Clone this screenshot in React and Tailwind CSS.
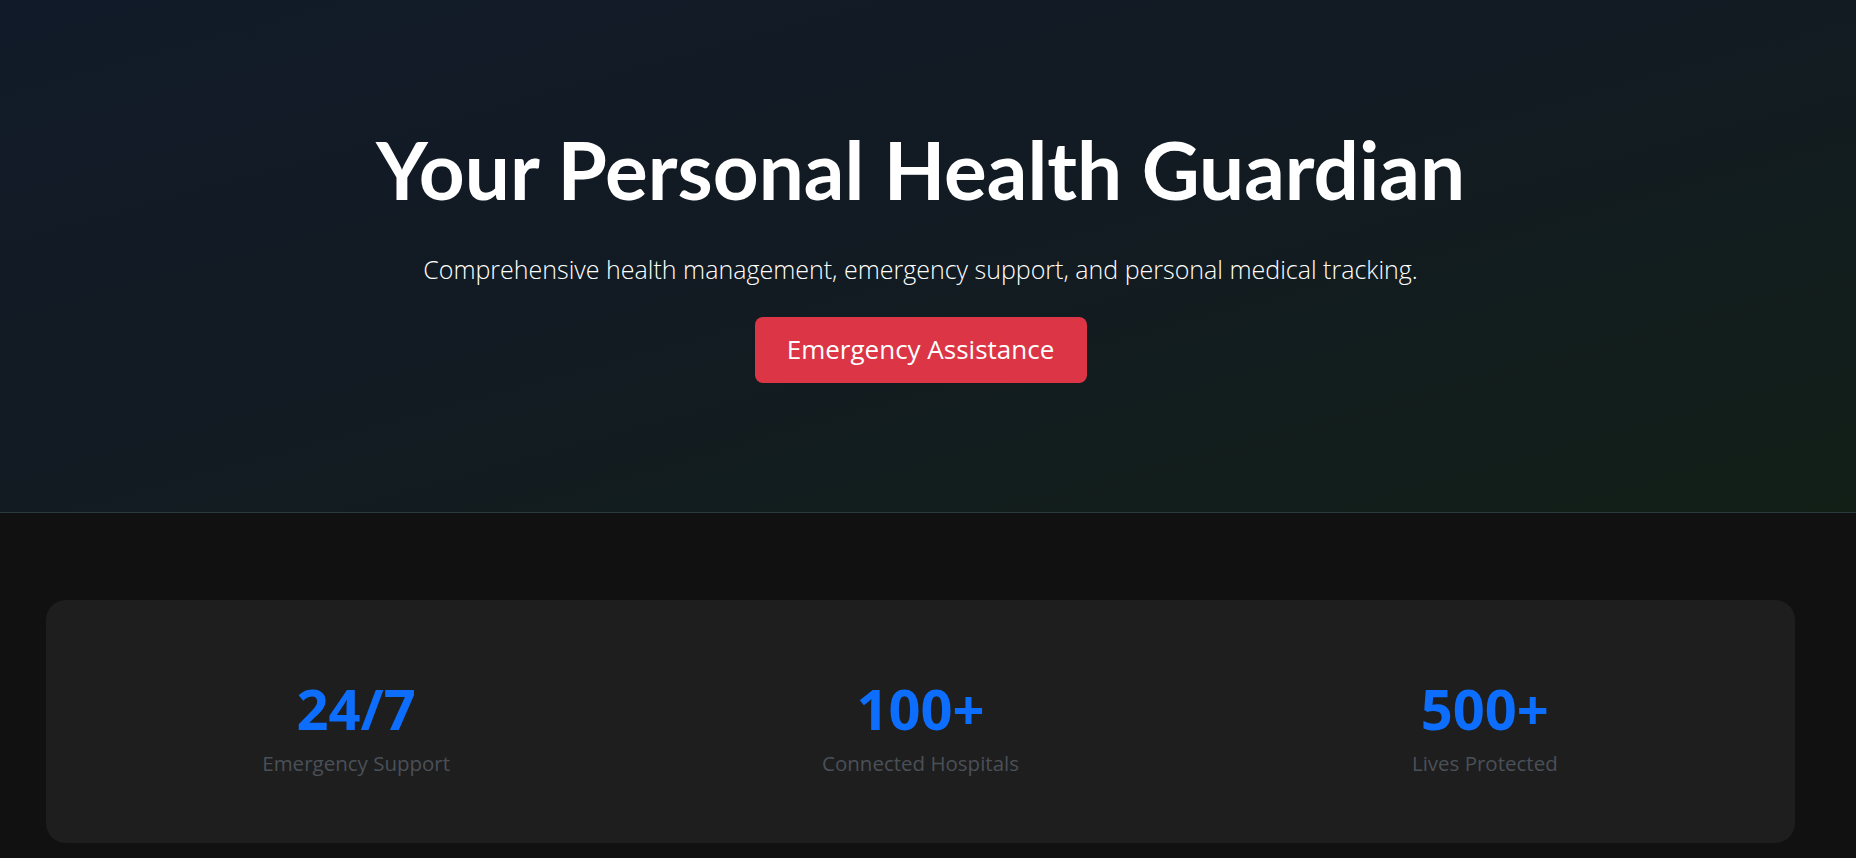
import React from "react";

const stats = [
  { value: "24/7", label: "Emergency Support" },
  { value: "100+", label: "Connected Hospitals" },
  { value: "500+", label: "Lives Protected" },
];

export default function App() {
  return (
    <div className="min-h-screen bg-[#111111] font-['Segoe_UI','Open_Sans',sans-serif]">
      {/* hero */}
      <section className="h-[513px] bg-linear-to-br from-[#111a28] via-[#121b22] to-[#121f17] border-b border-[#2b3a3e]">
        <div className="h-full pr-[15px] pb-[8px] flex flex-col items-center justify-center text-center">
          <h1 className="font-['Lato',sans-serif] text-[80px] leading-[1.2] font-bold text-white">Your Personal Health Guardian</h1>
          <p className="mt-[34px] text-[25px] font-light text-white">
            Comprehensive health management, emergency support, and personal medical tracking.
          </p>
          <button className="mt-[28px] w-[332px] h-[66px] rounded-lg bg-[#dc3545] text-white text-[26px]">
            Emergency Assistance
          </button>
        </div>
      </section>

      {/* stats */}
      <section className="pt-[87px] pb-[15px] pl-[46px] pr-[61px]">
        <div className="rounded-[20px] bg-[#1e1e1e] h-[243px] px-7 grid grid-cols-3 items-center">
          {stats.map((s) => (
            <div key={s.label} className="flex flex-col items-center pt-[10px]">
              <div className="text-[56px] leading-[1.2] font-bold text-[#0d6efd]">{s.value}</div>
              <div className="mt-[6px] text-[20.5px] text-[#4a5058]">{s.label}</div>
            </div>
          ))}
        </div>
      </section>
    </div>
  );
}
